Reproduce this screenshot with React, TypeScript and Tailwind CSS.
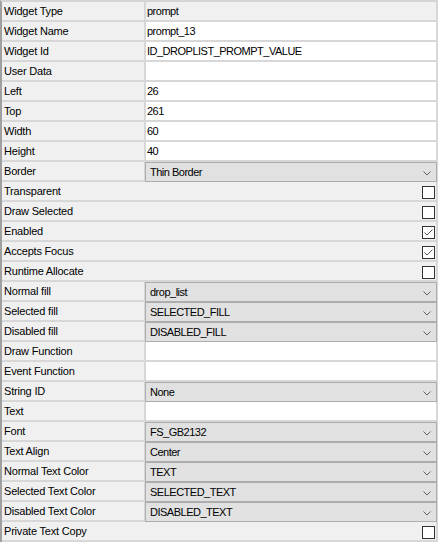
import React from "react";

type Kind = "ro" | "text" | "drop" | "check";

interface Prop {
  label: string;
  kind: Kind;
  value?: string;
  checked?: boolean;
}

const props: Prop[] = [
  { label: "Widget Type", kind: "ro", value: "prompt" },
  { label: "Widget Name", kind: "text", value: "prompt_13" },
  { label: "Widget Id", kind: "text", value: "ID_DROPLIST_PROMPT_VALUE" },
  { label: "User Data", kind: "text", value: "" },
  { label: "Left", kind: "text", value: "26" },
  { label: "Top", kind: "text", value: "261" },
  { label: "Width", kind: "text", value: "60" },
  { label: "Height", kind: "text", value: "40" },
  { label: "Border", kind: "drop", value: "Thin Border" },
  { label: "Transparent", kind: "check", checked: false },
  { label: "Draw Selected", kind: "check", checked: false },
  { label: "Enabled", kind: "check", checked: true },
  { label: "Accepts Focus", kind: "check", checked: true },
  { label: "Runtime Allocate", kind: "check", checked: false },
  { label: "Normal fill", kind: "drop", value: "drop_list" },
  { label: "Selected fill", kind: "drop", value: "SELECTED_FILL" },
  { label: "Disabled fill", kind: "drop", value: "DISABLED_FILL" },
  { label: "Draw Function", kind: "text", value: "" },
  { label: "Event Function", kind: "text", value: "" },
  { label: "String ID", kind: "drop", value: "None" },
  { label: "Text", kind: "text", value: "" },
  { label: "Font", kind: "drop", value: "FS_GB2132" },
  { label: "Text Align", kind: "drop", value: "Center" },
  { label: "Normal Text Color", kind: "drop", value: "TEXT" },
  { label: "Selected Text Color", kind: "drop", value: "SELECTED_TEXT" },
  { label: "Disabled Text Color", kind: "drop", value: "DISABLED_TEXT" },
  { label: "Private Text Copy", kind: "check", checked: false },
];

function Chevron() {
  return (
    <svg width="8" height="5" viewBox="0 0 8 5" className="mr-[5px] mt-[8px]">
      <polyline points="0.5,0.5 4,4 7.5,0.5" fill="none" stroke="#606060" strokeWidth="1" />
    </svg>
  );
}

function CheckBox({ checked }: { checked?: boolean }) {
  return (
    <div className="mt-[4px] mr-[1px] h-[13px] w-[13px] border border-[#333333] bg-white">
      {checked && (
        <svg width="11" height="11" viewBox="0 0 11 11">
          <polyline points="1.5,5.5 4,8 9.5,2.5" fill="none" stroke="#555555" strokeWidth="1" />
        </svg>
      )}
    </div>
  );
}

function Row({ p }: { p: Prop }) {
  const label = (
    <div className="pl-[2px] pt-[3px] leading-[13px] text-[11px] tracking-[-0.2px] text-black whitespace-nowrap">
      {p.label}
    </div>
  );

  if (p.kind === "check") {
    return (
      <div className="flex h-[20px]">
        <div className="flex flex-1 justify-between border-b-2 border-[#d7d7d7] bg-[#f0f0f0]">
          {label}
          <CheckBox checked={p.checked} />
        </div>
        <div className="w-[2px] bg-[#d7d7d7]" />
      </div>
    );
  }

  if (p.kind === "drop") {
    return (
      <div className="flex h-[20px]">
        <div className="w-[142px] border-b-2 border-[#d7d7d7] bg-[#f0f0f0]">{label}</div>
        <div className="w-[1px] bg-[#d7d7d7]" />
        <div className="flex flex-1 justify-between border border-[#adadad] bg-[#e1e1e1]">
          <span className="pl-[4px] pt-[3px] leading-[13px] text-[11px] tracking-[-0.5px] text-black whitespace-nowrap">
            {p.value}
          </span>
          <Chevron />
        </div>
        <div className="w-[1px] bg-[#d7d7d7]" />
      </div>
    );
  }

  return (
    <div className="flex h-[20px]">
      <div className="w-[142px] border-b-2 border-[#d7d7d7] bg-[#f0f0f0]">{label}</div>
      <div className="w-[2px] bg-[#d7d7d7]" />
      <div
        className={
          p.kind === "ro"
            ? "flex-1 border-b-2 border-[#d7d7d7] bg-[#f0f0f0]"
            : "flex-1 border-b-2 border-[#d7d7d7] bg-white"
        }
      >
        <div className="pl-[1px] pt-[3px] leading-[13px] text-[11px] tracking-[-0.5px] text-black whitespace-nowrap">
          {p.value}
        </div>
      </div>
      <div className="w-[2px] bg-[#d7d7d7]" />
    </div>
  );
}

export default function App() {
  return (
    <div
      className="h-[542px] w-[438px] overflow-hidden border-l-2 border-t-2 border-l-[#a0a0a0] border-t-[#d4d4d4] bg-[#f0f0f0]"
      style={{ fontFamily: '"Liberation Sans", Arial, sans-serif' }}
    >
      {props.map((p) => (
        <Row key={p.label} p={p} />
      ))}
    </div>
  );
}
